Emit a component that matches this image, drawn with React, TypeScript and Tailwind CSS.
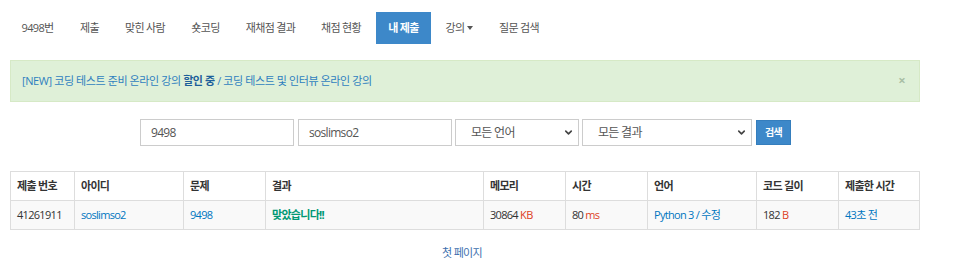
import { ChevronDown } from 'lucide-react'

const navItems = [
  { label: '9498번', w: 'w-[55px]' },
  { label: '제출', w: 'w-[41px]' },
  { label: '맞힌 사람', w: 'w-[62px]' },
  { label: '숏코딩', w: 'w-[51px]' },
  { label: '재채점 결과', w: 'w-[71px]' },
  { label: '채점 현황', w: 'w-[62px]' },
  { label: '내 제출', w: 'w-[55px]', active: true },
  { label: '강의', w: 'w-[49px]', caret: true },
  { label: '질문 검색', w: 'w-[62px]' },
]

const columns = [
  { title: '제출 번호', w: 'w-[63px]' },
  { title: '아이디', w: 'w-[109px]' },
  { title: '문제', w: 'w-[82px]' },
  { title: '결과', w: 'w-[218px]' },
  { title: '메모리', w: 'w-[82px]' },
  { title: '시간', w: 'w-[82px]' },
  { title: '언어', w: 'w-[109px]' },
  { title: '코드 길이', w: 'w-[82px]' },
  { title: '제출한 시간', w: 'flex-1' },
]

function Select({ label, w }: { label: string; w: string }) {
  return (
    <div className={`${w} h-[27px] border border-[#ccc] bg-white flex items-center pl-[15px] pr-[4px] text-[#555]`}>
      <span className="flex-1 text-[12px]">{label}</span>
      <ChevronDown size={11} strokeWidth={3.5} className="text-[#444]" />
    </div>
  )
}

export default function App() {
  const cells = [
    <span className="text-[#333]">41261911</span>,
    <span className="text-[#0076c0]">soslimso2</span>,
    <span className="text-[#0076c0]">9498</span>,
    <span className="text-[#009874] font-bold">맞았습니다!!</span>,
    <span className="text-[#333]">30864 <span className="text-[#dd4124]">KB</span></span>,
    <span className="text-[#333]">80 <span className="text-[#dd4124]">ms</span></span>,
    <span className="text-[#0076c0]">Python 3 / 수정</span>,
    <span className="text-[#333]">182 <span className="text-[#dd4124]">B</span></span>,
    <span className="text-[#0076c0]">43초 전</span>,
  ]

  return (
    <main className="w-[968px] h-[271px] bg-white font-['Open_Sans','Noto_Sans_CJK_KR',sans-serif] text-[11px] tracking-[-0.7px] text-[#333]">
      <div className="w-[910px] ml-[10px]">
        <ul className="flex gap-[4px] pt-[12px]">
          {navItems.map((item) => (
            <li
              key={item.label}
              className={`${item.w} h-[32px] flex items-center justify-center ${item.active ? 'bg-[#3d88c9] text-white font-bold' : 'text-[#555]'}`}
            >
              {item.label}
              {item.caret ? <span className="ml-[3px] inline-block w-0 h-0 border-l-[3px] border-r-[3px] border-t-[4px] border-l-transparent border-r-transparent border-t-[#555]" /> : null}
            </li>
          ))}
        </ul>

        <div className="mt-[16px] h-[42px] border border-[#d6e9c6] bg-[#dff0d8] flex items-center pl-[11px] pr-[14px]">
          <p className="flex-1 text-[#2f7fbf] tracking-[-0.4px]">
            [NEW] 코딩 테스트 준비 온라인 강의 <b className="text-[#1d5f9a]">할인 중</b> / 코딩 테스트 및 인터뷰 온라인 강의
          </p>
          <span className="text-[#a9bfa5] font-bold text-[13px]">×</span>
        </div>

        <div className="mt-[17px] ml-[130px] flex items-center">
          <div className="w-[154px] h-[27px] border border-[#ccc] flex items-center pl-[10px] text-[#555] text-[12px]">9498</div>
          <div className="ml-[4px] w-[154px] h-[27px] border border-[#ccc] flex items-center pl-[10px] text-[#555] text-[12px]">soslimso2</div>
          <div className="ml-[3px]">
            <Select label="모든 언어" w="w-[124px]" />
          </div>
          <div className="ml-[3px]">
            <Select label="모든 결과" w="w-[170px]" />
          </div>
          <button className="ml-[4px] w-[35px] h-[25px] bg-[#3d88c9] border border-[#357ebd] text-white font-bold text-[10px] flex items-center justify-center">
            검색
          </button>
        </div>

        <div className="mt-[25px] border border-[#ddd]">
          <div className="flex h-[29px] border-b border-[#ddd] font-bold text-[#333]">
            {columns.map((c, i) => (
              <div key={c.title} className={`${c.w} flex items-center pl-[6px] ${i > 0 ? 'border-l border-[#ddd]' : ''}`}>
                {c.title}
              </div>
            ))}
          </div>
          <div className="flex h-[28px] bg-[#f9f9f9]">
            {columns.map((c, i) => (
              <div key={c.title} className={`${c.w} flex items-center pl-[6px] ${i > 0 ? 'border-l border-[#ddd]' : ''}`}>
                {cells[i]}
              </div>
            ))}
          </div>
        </div>

        <div className="mt-[15px] text-center pr-[6px] text-[#3d6fae]">첫 페이지</div>
      </div>
    </main>
  )
}
